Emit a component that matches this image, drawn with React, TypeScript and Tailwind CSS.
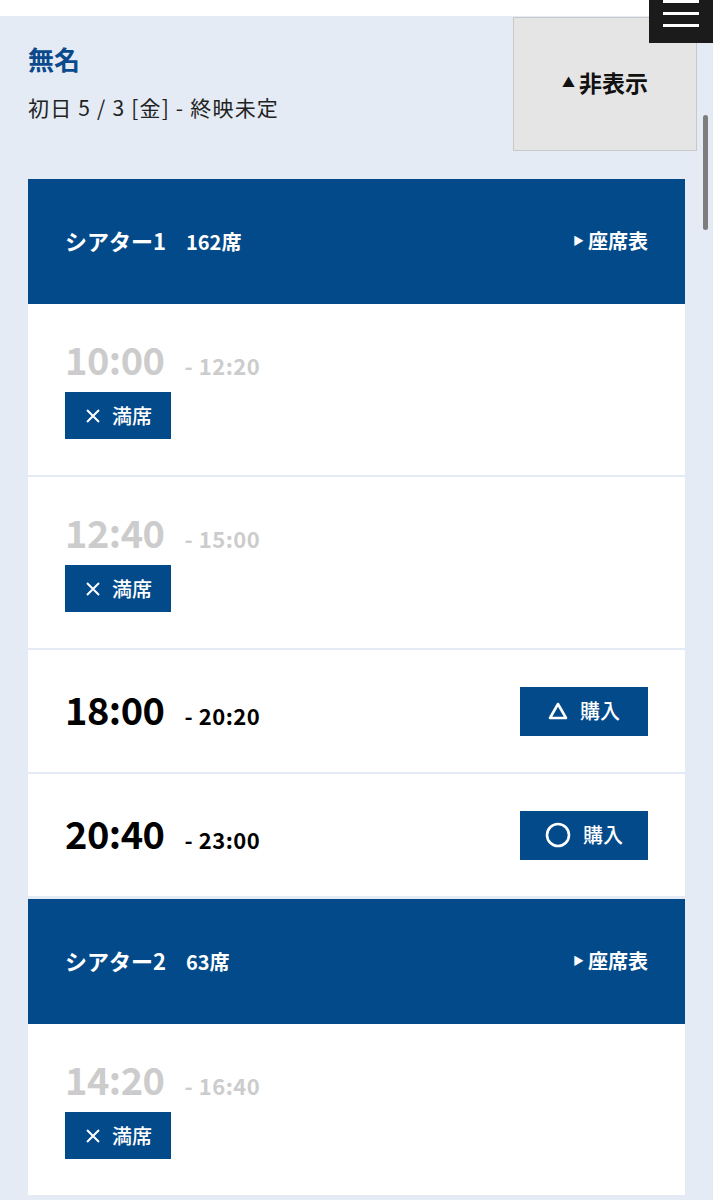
import React from "react";

const BLUE = "bg-[#034a8a]";

type Show = {
  start: string;
  end: string;
  status: "full" | "few" | "open";
};

type Theater = {
  name: string;
  seats: string;
  shows: Show[];
};

const theaters: Theater[] = [
  {
    name: "シアター1",
    seats: "162席",
    shows: [
      { start: "10:00", end: "12:20", status: "full" },
      { start: "12:40", end: "15:00", status: "full" },
      { start: "18:00", end: "20:20", status: "few" },
      { start: "20:40", end: "23:00", status: "open" },
    ],
  },
  {
    name: "シアター2",
    seats: "63席",
    shows: [{ start: "14:20", end: "16:40", status: "full" }],
  },
];

function FullBadge() {
  return (
    <div className={`${BLUE} mt-[10px] flex h-[47px] w-[106px] items-center gap-[11px] pl-[20px] text-white`}>
      <svg width="16" height="16" viewBox="0 0 16 16" fill="none" stroke="currentColor" strokeWidth={2}>
        <path d="M2 2l12 12M14 2L2 14" />
      </svg>
      <span className="text-[20px] font-medium leading-none">満席</span>
    </div>
  );
}

function BuyButton({ status }: { status: "few" | "open" }) {
  return (
    <button className={`${BLUE} flex h-[49px] w-[128px] items-center justify-center gap-[12px] text-white`}>
      {status === "few" ? (
        <svg width="20" height="18" viewBox="0 0 20 18" fill="none" stroke="currentColor" strokeWidth={2.6} strokeLinejoin="round">
          <path d="M10 2L18 16H2Z" />
        </svg>
      ) : (
        <svg width="26" height="26" viewBox="0 0 26 26" fill="none" stroke="currentColor" strokeWidth={2.6}>
          <circle cx="13" cy="13" r="11" />
        </svg>
      )}
      <span className="text-[20px] font-medium leading-none">購入</span>
    </button>
  );
}

function ShowRow({ show }: { show: Show }) {
  const full = show.status === "full";
  return (
    <div className="bg-white px-[37px]">
      {full ? (
        <div className="pt-[34px] pb-[36px]">
          <div className="flex items-baseline gap-[20px] text-[#cccccc]">
            <span className="text-[38px] font-bold leading-[42px] tracking-[-0.5px]">{show.start}</span>
            <span className="text-[22px] font-bold tracking-[0.5px]">- {show.end}</span>
          </div>
          <FullBadge />
        </div>
      ) : (
        <div className="flex h-[122px] items-center justify-between">
          <div className="flex items-baseline gap-[20px] text-black">
            <span className="text-[38px] font-bold leading-none tracking-[-0.5px]">{show.start}</span>
            <span className="text-[22px] font-bold tracking-[0.5px]">- {show.end}</span>
          </div>
          <BuyButton status={show.status as "few" | "open"} />
        </div>
      )}
    </div>
  );
}

function TheaterBlock({ theater }: { theater: Theater }) {
  return (
    <div className="flex flex-col">
      <div className={`${BLUE} flex h-[125px] items-center justify-between px-[37px] pb-[2px] text-white`}>
        <div className="flex items-baseline gap-[20px]">
          <span className="text-[22px] font-bold">{theater.name}</span>
          <span className="text-[20px] font-bold">{theater.seats}</span>
        </div>
        <a className="flex items-center gap-[4px] text-[20px] font-bold">
          <span className="text-[11px]">▶</span>座席表
        </a>
      </div>
      <div className="flex flex-col gap-[2px]">
        {theater.shows.map((s) => (
          <ShowRow key={s.start} show={s} />
        ))}
      </div>
    </div>
  );
}

export default function App() {
  return (
    <div
      className="relative min-h-[1200px] overflow-hidden bg-[#e4ebf4]"
      style={{ fontFamily: '"Noto Sans CJK JP", "Noto Sans", sans-serif' }}
    >
      <div className="h-[16px] bg-white" />

      {/* Title + toggle */}
      <div className="flex items-start justify-between pl-[28px] pr-[16px]">
        <div className="pt-[26px]">
          <h1 className="text-[26px] font-bold leading-[34px] text-[#0a4a8c]">無名</h1>
          <p className="mt-[17px] text-[21px] leading-[28px] tracking-[1.2px] text-[#222]">初日 5 / 3 [金] - 終映未定</p>
        </div>
        <button className="mt-[1px] flex h-[134px] w-[184px] items-center justify-center border border-[#c9c9c9] bg-[#e5e5e5] pb-[4px] text-[23px] font-bold text-[#111]">
          <span className="mr-[4px] text-[13px]">▲</span>非表示
        </button>
      </div>

      {/* Schedule card */}
      <div className="mx-[28px] mt-[28px] flex flex-col gap-[3px]">
        {theaters.map((t) => (
          <TheaterBlock key={t.name} theater={t} />
        ))}
      </div>

      {/* Menu button */}
      <div className="absolute right-0 top-0 flex h-[43px] w-[64px] flex-col items-center gap-[9px] bg-[#1b1b1b]">
        <div className="h-[3px] w-[36px] bg-white" />
        <div className="h-[3px] w-[36px] bg-white" />
        <div className="h-[3px] w-[36px] bg-white" />
      </div>

      {/* Scroll indicator */}
      <div className="absolute right-[5px] top-[115px] h-[115px] w-[5px] rounded-full bg-[#7d7d7d]" />
    </div>
  );
}
